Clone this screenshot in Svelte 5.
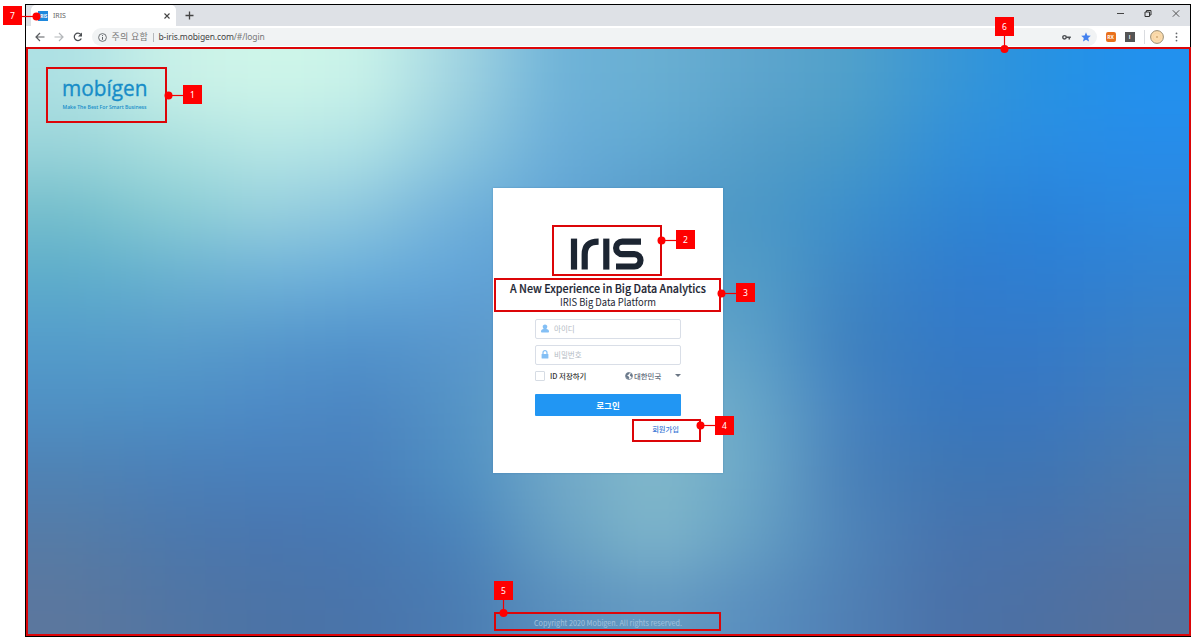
<script>
  // Colour mesh behind the login page: control colours, interpolated to small tiles and softened.
  const mesh = [
    ['#aee1e4', '#c9f1e8', '#cff6e9', '#c8f2e9', '#a0d3e1', '#6eb2d8', '#69afd2', '#5ea5cd', '#50a0ca', '#3896d6', '#2692e2', '#2291ee'],
    ['#9bd5da', '#aae0df', '#b8e7e5', '#b0e2e5', '#8cc7de', '#6aadd8', '#5fa8d2', '#549dc8', '#4799c8', '#328fd8', '#2a8de2', '#278ce9'],
    ['#76bfcc', '#8accd4', '#98d1de', '#8cc6de', '#71b1da', '#61a5d6', '#5699c8', '#4c98c6', '#3c8fcc', '#2f85d2', '#2983da', '#2c88df'],
    ['#5eadcb', '#6ab2d0', '#71b3d8', '#6aaeda', '#62a4d8', '#5b9bcf', '#5a9cc4', '#529cc6', '#3e86c4', '#317dcd', '#2e7ed2', '#3282d1'],
    ['#549dcb', '#599dcb', '#5698cc', '#5293cc', '#5997cc', '#64a1cc', '#6aaac9', '#5c9fc8', '#3e80be', '#347ac6', '#347ac8', '#3a7fc5'],
    ['#4f90c4', '#4d8fc5', '#4d8ac6', '#4b86c2', '#5594c6', '#68a6c9', '#7db5cb', '#67a6c8', '#4682be', '#3777be', '#3a77bf', '#427cba'],
    ['#4f82b4', '#4b80b8', '#497fbb', '#4980bb', '#4f8fc2', '#72a9c8', '#82b9ca', '#6ba7c8', '#4980b8', '#3f76b3', '#3f75b3', '#4b79ae'],
    ['#557ba6', '#4c78ac', '#4976af', '#4778b2', '#4a83ba', '#68a1c4', '#7db4ca', '#659fc4', '#4e83b8', '#4773ad', '#4972aa', '#5074a5'],
    ['#5b779e', '#5175a3', '#4b73a6', '#4974ab', '#4a7cb2', '#5a90be', '#649ac2', '#598ebe', '#4f7fb4', '#4a71a8', '#4d70a2', '#55709b']
  ];
  const cw = 1166 / 12;
  const ch = 590 / 9;
  const clamp = (n, hi) => Math.max(0, Math.min(hi, n));
  const rgb = mesh.map((row) => row.map((h) => [1, 3, 5].map((i) => parseInt(h.slice(i, i + 2), 16))));
  const sample = (x, y) => {
    const u = clamp(x / cw - 0.5, 11);
    const v = clamp(y / ch - 0.5, 8);
    const c = Math.min(10, Math.floor(u));
    const r = Math.min(7, Math.floor(v));
    const s = u - c;
    const t = v - r;
    const mix = [0, 1, 2].map((k) => Math.round(
      (rgb[r][c][k] * (1 - s) + rgb[r][c + 1][k] * s) * (1 - t) +
      (rgb[r + 1][c][k] * (1 - s) + rgb[r + 1][c + 1][k] * s) * t
    ));
    return `rgb(${mix})`;
  };
  const tile = 20;
  const cells = [];
  for (let y = -100; y < 700; y += tile)
    for (let x = -100; x < 1280; x += tile)
      cells.push({ x, y, fill: sample(x + tile / 2, y + tile / 2) });

  const frames = [
    { x: 46, y: 67, w: 121, h: 56 },
    { x: 552, y: 225, w: 110, h: 51 },
    { x: 494, y: 278, w: 227, h: 34 },
    { x: 632, y: 419, w: 69, h: 23 },
    { x: 494, y: 612, w: 227, h: 19 },
    { x: 26, y: 47, w: 1165, h: 589 }
  ];
  const notes = [
    { n: 1, x: 183, y: 85, dx: 168.5, dy: 95.5 },
    { n: 2, x: 676, y: 230, dx: 661.5, dy: 240.5 },
    { n: 3, x: 736, y: 283, dx: 721.5, dy: 293.5 },
    { n: 4, x: 715, y: 416, dx: 700.5, dy: 425.5 },
    { n: 5, x: 494, y: 581, dx: 503.5, dy: 613 },
    { n: 6, x: 995, y: 17, dx: 1004.5, dy: 49 },
    { n: 7, x: 3, y: 6, dx: 36.5, dy: 16.5 }
  ];
  // Leader lines stay horizontal for side labels and vertical for labels above.
  const leader = (m) =>
    Math.abs(m.dx - m.x - 9.5) < 1 ? `M${m.dx} ${m.y + 10}V${m.dy}` : `M${m.x + 9.5} ${m.dy}H${m.dx}`;
</script>

<main>
  <section class="window">
    <header class="tabs">
      <div class="tab">
        <span class="favicon">IRIS</span>
        <span class="title">IRIS</span>
        <svg class="close" width="6" height="6" viewBox="0 0 6 6"><path d="M.5 .5l5 5M5.500 .5l-5 5" stroke="#444" stroke-width="1.100" /></svg>
      </div>
      <svg class="plus" width="9" height="9" viewBox="0 0 9 9"><path d="M4.500 .5v8M.5 4.500h8" stroke="#444" stroke-width="1.300" /></svg>
      <div class="controls">
        <svg width="7" height="9" viewBox="0 0 7 9"><path d="M0 4.500h7" stroke="#444" /></svg>
        <svg width="8" height="9" viewBox="0 0 8 9"><path d="M1 3h4.500v4.500H1zM2.500 3V1.500H7V6H5.500" fill="none" stroke="#333" /></svg>
        <svg width="8" height="9" viewBox="0 0 8 9"><path d="M.8 1.300l6.400 6.400M7.200 1.300L.8 7.700" stroke="#444" stroke-width=".9" /></svg>
      </div>
    </header>

    <nav class="toolbar">
      <svg width="10" height="10" viewBox="0 0 10 10"><path d="M9.500 5H1.200M5 1L1 5l4 4" fill="none" stroke="#5a5d61" stroke-width="1.200" /></svg>
      <svg width="10" height="10" viewBox="0 0 10 10"><path d="M.5 5h8.300M5 1l4 4-4 4" fill="none" stroke="#b4b7ba" stroke-width="1.200" /></svg>
      <svg width="10" height="10" viewBox="0 0 10 10"><path d="M8.300 6.500A3.700 3.700 0 1 1 7.800 2.400" fill="none" stroke="#4b4e52" stroke-width="1.300" /><path d="M9 .5v4H5z" fill="#4b4e52" /></svg>
      <div class="address">
        <svg width="9" height="9" viewBox="0 0 9 9"><circle cx="4.500" cy="4.500" r="3.900" fill="none" stroke="#5f6368" stroke-width=".9" /><path d="M4.500 4v2.800M4.500 2.100v1" stroke="#5f6368" /></svg>
        <span class="warn">주의 요함</span>
        <i></i>
        <span class="url">b-iris.mobigen.com<em>/#/login</em></span>
        <svg class="key" width="9" height="7" viewBox="0 0 9 7"><circle cx="2.500" cy="3.300" r="1.700" fill="none" stroke="#4b4e52" stroke-width="1.400" /><path d="M4 3.300h4.800M7.300 3.300v2.100" stroke="#4b4e52" stroke-width="1.500" /></svg>
        <svg class="star" width="10" height="10" viewBox="0 0 10 10"><path d="M5 .3l1.300 3.200 3.500.3-2.600 2.300.8 3.500L5 7.800 2 9.600l.8-3.500L.2 3.800l3.500-.3z" fill="#4280ee" /></svg>
      </div>
      <span class="ext orange">RX</span>
      <span class="ext gray">I</span>
      <i class="rule"></i>
      <svg class="avatar" width="14" height="14" viewBox="0 0 14 14"><circle cx="7" cy="7" r="6.400" fill="#fbdcae" stroke="#8f8269" stroke-width=".9" /><circle cx="7" cy="7" r="4" fill="none" stroke="#f6cf98" stroke-width=".6" /><circle cx="7" cy="7" r=".8" fill="#b7894e" /></svg>
      <svg class="more" width="3" height="10" viewBox="0 0 3 10"><g fill="#66696d"><circle cx="1.500" cy="1.400" r=".9" /><circle cx="1.500" cy="5" r=".9" /><circle cx="1.500" cy="8.600" r=".9" /></g></svg>
    </nav>

    <div class="page">
      <svg class="backdrop" viewBox="0 0 1166 590" preserveAspectRatio="none">
        <defs><filter id="soft" filterUnits="userSpaceOnUse" x="-100" y="-100" width="1366" height="790" color-interpolation-filters="sRGB"><feGaussianBlur stdDeviation="24 20" /></filter></defs>
        <g filter="url(#soft)">
          {#each cells as c}<rect x={c.x} y={c.y} width={tile + 1} height={tile + 1} fill={c.fill} />{/each}
        </g>
      </svg>

      <div class="brand">
        <svg width="90" height="30" viewBox="0 0 90 30"><text class="name" x="0" y="18.500" textLength="85.500" lengthAdjust="spacingAndGlyphs">mobígen</text></svg>
        <svg width="90" height="9" viewBox="0 0 90 9"><text class="motto" x="0.500" y="1.500" textLength="84" lengthAdjust="spacingAndGlyphs">Make The Best For Smart Business</text></svg>
      </div>

      <form class="card" onsubmit={(e) => e.preventDefault()}>
        <svg class="logo" width="73" height="32" viewBox="0 0 73 32">
          <g fill="none" stroke="#1c2532" stroke-width="6.200">
            <path d="M4 .6v31" />
            <path d="M14.700 31.600V16.500Q14.700 3.700 28.600 3.700" />
            <path d="M36.300 .6v31" />
            <path d="M71 3.700H52.300a6.100 6.100 0 0 0 0 12.400H64.300a6.100 6.100 0 0 1 0 12.400H46" />
          </g>
        </svg>
        <h1><svg width="200" height="14" viewBox="0 0 200 14"><text x="2" y="11" textLength="196" lengthAdjust="spacingAndGlyphs">A New Experience in Big Data Analytics</text></svg></h1>
        <h2><svg width="100" height="13" viewBox="0 0 100 13"><text x="2" y="10" textLength="96" lengthAdjust="spacingAndGlyphs">IRIS Big Data Platform</text></svg></h2>

        <div class="field">
          <svg width="8" height="9" viewBox="0 0 8 9"><path d="M4 .4c1.500 0 2.300 1 2.300 2.200S5.700 4.600 5.300 4.900C7 5.200 8 6 8 7.500v.3q0 .8-.8.8H.8Q0 8.600 0 7.800v-.3c0-1.500 1-2.300 2.700-2.600C2.300 4.600 1.700 3.800 1.700 2.600S2.500.4 4 .4z" fill="#83bff5" /></svg>
          <span>아이디</span>
        </div>
        <div class="field">
          <svg width="8" height="9" viewBox="0 0 8 9"><path d="M2 4V2.700a2 2 0 0 1 4 0V4" fill="none" stroke="#83bff5" stroke-width="1.200" /><rect x=".6" y="3.900" width="6.800" height="4.600" rx=".6" fill="#83bff5" /></svg>
          <span>비밀번호</span>
        </div>
        <div class="options">
          <span class="check"></span>
          <span class="save">ID 저장하기</span>
          <svg width="8" height="8" viewBox="0 0 8 8"><circle cx="4" cy="4" r="3.500" fill="#fff" stroke="#6b7a8c" stroke-width=".8" /><path d="M.6 3.800L1.200 1.800 2.800.5 4.700.7 4.200 2 3 2.900 2 3.300 3.400 4.300 4.300 5.200 3.600 7.300 1.600 6.400zM5 2.600L6.600 1.400 7.500 3.300 6.800 5.500 5.900 4.300 4.900 4z" fill="#6b7a8c" /></svg>
          <span class="lang">대한민국</span>
          <b class="caret"></b>
        </div>
        <button>로그인</button>
        <span class="join">회원가입</span>
      </form>

      <footer><svg width="152" height="12" viewBox="0 0 152 12"><text x="2" y="8.500" textLength="148" lengthAdjust="spacingAndGlyphs">Copyright 2020 Mobigen. All rights reserved.</text></svg></footer>
    </div>
  </section>

  <svg class="marks" width="1195" height="641" viewBox="0 0 1195 641">
    {#each frames as f}
      <rect x={f.x + 1} y={f.y + 1} width={f.w - 2} height={f.h - 2} fill="none" stroke="#dc0508" stroke-width="2" />
    {/each}
    {#each notes as m}
      <path d={leader(m)} stroke="#f00000" stroke-width="1.200" fill="none" />
      <circle cx={m.dx} cy={m.dy} r="4" fill="#f00" />
      <rect x={m.x} y={m.y} width="19" height="19" fill="#f00" />
      <text x={m.x + 9.5} y={m.y + 12.700} text-anchor="middle">{m.n}</text>
    {/each}
  </svg>
</main>

<style>
  :global(body) { margin: 0; background: #fff; }
  main { position: relative; box-sizing: border-box; width: 1195px; height: 641px; padding: 4px 4px 4px 25px; overflow: hidden; font-family: "Noto Sans CJK KR", "Noto Sans", sans-serif; }
  svg { display: block; flex: none; overflow: visible; }
  i { display: block; flex: none; }
  .window { box-sizing: border-box; display: flex; flex-direction: column; width: 1166px; height: 633px; border: 1px solid #000; }
  .tabs { display: flex; align-items: center; height: 21px; flex: none; padding-left: 5px; background: #dee1e6; }
  .tab { box-sizing: border-box; display: flex; align-items: center; width: 145px; height: 21px; padding: 0 6px 0 7px; border-radius: 5px 5px 0 0; background: #fff; }
  .favicon { width: 10px; height: 10px; background: #1e88dd; color: #fff; font: 700 4.500px/10px "Open Sans", sans-serif; text-align: center; }
  .title { flex: 1; margin-left: 5px; color: #666; font: 7px/10px "Noto Sans", sans-serif; }
  .plus { margin-left: 9px; }
  .controls { display: flex; gap: 20px; margin: -4px 10px 0 auto; }
  .toolbar { display: flex; align-items: center; gap: 9px; height: 22px; flex: none; padding: 0 12px 0 8.500px; background: #fff; }
  .toolbar .more { margin-left: 2.500px; }
  .address { box-sizing: border-box; display: flex; align-items: center; width: 1005px; height: 18px; padding: 0 6px; border-radius: 9px; background: #f1f3f4; color: #777; font-size: 9px; line-height: 18px; }
  .warn { width: 37px; margin-left: 5px; white-space: nowrap; letter-spacing: .3px; }
  .address i { width: 1px; height: 9px; margin: 0 5px 0 4px; background: #b5b8bb; }
  .url { flex: 1; color: #444; font-family: "Noto Sans", sans-serif; font-size: 8.500px; letter-spacing: -.12px; }
  .url em { color: #777; font-style: normal; }
  .star { margin-left: 10px; }
  .ext { width: 10px; height: 10px; border-radius: 2px; color: #fff; font: 700 5px/10px "Open Sans", sans-serif; text-align: center; }
  .orange { background: #e9711c; }
  .gray { border-radius: 0; background: #555; }
  .rule { width: 1px; height: 14px; background: #dadce0; }
  .avatar { margin-left: -4px; }
  .page { position: relative; display: flex; flex: 1; flex-direction: column; align-items: center; overflow: hidden; }
  .backdrop { position: absolute; inset: 0; width: 100%; height: 100%; overflow: hidden; }
  .brand { position: relative; align-self: flex-start; margin: 29px 0 0 36px; height: 40px; }
  .brand .name { fill: #178dc8; stroke: #178dc8; stroke-width: .35; font: 22.500px "Open Sans", sans-serif; }
  .brand .motto { fill: #178dc8; font: 600 5px "Open Sans", sans-serif; }
  .card { position: relative; box-sizing: border-box; display: flex; flex-direction: column; align-items: center; width: 230px; height: 284.500px; margin-top: 71px; padding: 50px 42px 0; background: #fff; box-shadow: 0 0 2px #2868a066; }
  .logo { margin-left: -3px; }
  h1, h2 { margin: 0; font-size: 0; }
  h1 { margin-top: 12px; }
  h1 text { fill: #1c2532; font: 500 11.500px "Noto Sans CJK KR", sans-serif; stroke: #1c2532; stroke-width: .15; }
  h2 text { fill: #1c2532; font: 400 10.300px "Noto Sans CJK KR", sans-serif; }
  .field { box-sizing: border-box; display: flex; align-items: center; gap: 5px; width: 146px; height: 20px; flex: none; margin-top: 6px; padding: 0 5px; border: 1px solid #d9dee7; border-radius: 2px; color: #b3bac4; font-size: 7.500px; line-height: 18px; }
  h2 + .field { margin-top: 9.500px; }
  .options { display: flex; align-items: center; width: 146px; height: 12px; flex: none; margin-top: 5px; color: #333; font-size: 7.400px; font-weight: 500; line-height: 12px; }
  .check { box-sizing: border-box; width: 10px; height: 10px; margin-right: 5px; border: 1px solid #d6dce4; border-radius: 1px; }
  .save { width: 75px; }
  .lang { flex: 1; margin-left: 1px; color: #5f6c7c; }
  .caret { border: 3px solid transparent; border-top-color: #6b7684; border-bottom: 0; }
  button { width: 146px; height: 22px; flex: none; margin: 12px 0 0; padding: 0; border: 0; border-radius: 1px; background: #2196f3; color: #fff; font: 700 8.500px/22px "Noto Sans CJK KR", sans-serif; }
  .join { align-self: flex-end; margin: 7.500px 2px 0 0; color: #3a78d5; font-size: 7.300px; font-weight: 500; line-height: 12px; }
  footer { position: relative; margin: auto 0 7px; }
  footer text { fill: #a3c3df; font: 7.700px "Noto Sans CJK KR", sans-serif; }
  .marks { position: absolute; inset: 0; pointer-events: none; }
  .marks text { fill: #fff; font: 8.500px "Noto Sans", sans-serif; }
</style>
